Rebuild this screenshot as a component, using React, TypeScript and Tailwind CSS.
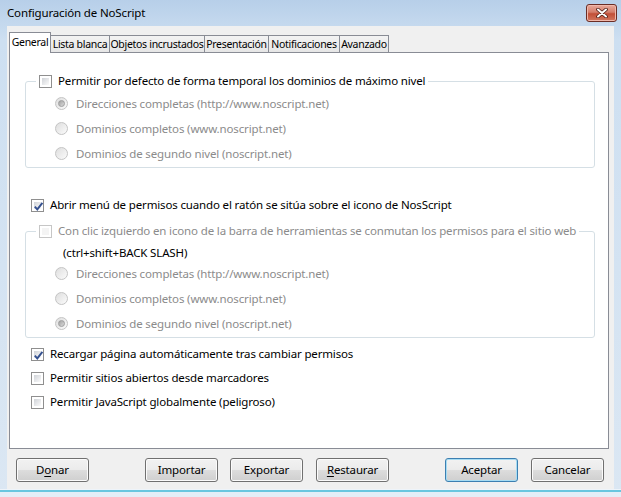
import React from "react";

const F = "font-['Noto_Sans','Open_Sans',sans-serif] tracking-[-0.15px]";

function Checkbox({ checked = false, disabled = false }: { checked?: boolean; disabled?: boolean }) {
  return (
    <span
      className={`relative flex h-[13px] w-[13px] shrink-0 border bg-white p-[2px] ${
        disabled ? "border-[#c6c6c6]" : "border-[#8f8f8f]"
      }`}
    >
      <span className={`flex-1 ${disabled ? "bg-[#f4f4f4]" : "bg-linear-to-br from-[#d0d3d8] to-[#fbfbfb]"}`} />
      {checked && (
        <svg className="absolute left-[1px] top-[1px]" width="11" height="11" viewBox="0 0 11 11">
          <path d="M1.8 5.6 L4.3 8.4 L9.4 1.9" fill="none" stroke="#35518f" strokeWidth="1.9" />
        </svg>
      )}
    </span>
  );
}

function Radio({ selected = false }: { selected?: boolean }) {
  return (
    <span className="flex h-[13px] w-[13px] shrink-0 items-center justify-center rounded-full border border-[#c4c4c4] bg-linear-to-br from-[#dedede] to-[#fbfbfb]">
      {selected && (
        <span className="h-[7px] w-[7px] rounded-full border border-[#9d9d9d] bg-linear-to-br from-[#a2a2a2] to-[#dadada]" />
      )}
    </span>
  );
}

function RadioRow({ label, selected = false }: { label: string; selected?: boolean }) {
  return (
    <div className="flex h-[25px] items-center pl-[29px]">
      <Radio selected={selected} />
      <span className="ml-[8px] whitespace-nowrap text-[11.5px] leading-[16px] text-[#8b8b8b]">{label}</span>
    </div>
  );
}

function CheckRow({ label, checked = false, className = "" }: { label: string; checked?: boolean; className?: string }) {
  return (
    <div className={`flex items-center pl-[21px] ${className}`}>
      <Checkbox checked={checked} />
      <span className="ml-[6px] whitespace-nowrap text-[11.5px] leading-[16px] text-black">{label}</span>
    </div>
  );
}

function Btn({
  children,
  isDefault = false,
  className = "",
}: {
  children: React.ReactNode;
  isDefault?: boolean;
  className?: string;
}) {
  return (
    <div
      className={`flex h-[24px] w-[73px] shrink-0 items-center justify-center rounded-[3px] border text-[11.5px] text-black bg-[linear-gradient(#f2f2f2,#ebebeb_50%,#dddddd_50%,#cfcfcf)] ${
        isDefault
          ? "border-[#3c7fb1] shadow-[inset_0_0_0_1px_#a6dcf3]"
          : "border-[#707070] shadow-[inset_0_0_0_1px_#fbfbfb]"
      } ${className}`}
    >
      {children}
    </div>
  );
}

const tabs: { label: string; w: string }[] = [
  { label: "Lista blanca", w: "w-[60px]" },
  { label: "Objetos incrustados", w: "w-[96px]" },
  { label: "Presentación", w: "w-[65px]" },
  { label: "Notificaciones", w: "w-[72px]" },
  { label: "Avanzado", w: "w-[50px]" },
];

export default function App() {
  return (
    <div
      className={`${F} flex h-[497px] w-[621px] flex-col overflow-hidden bg-[linear-gradient(#b7cfe9,#cddff1_40px,#dbe7f3)]`}
    >
      {/* Title bar */}
      <div className="flex h-[26px] shrink-0 items-start justify-between pl-[7px] pr-[4px]">
        <span className="mt-[5px] whitespace-nowrap text-[11.5px] leading-[16px] text-black">Configuración de NoScript</span>
        <div className="mt-[4px] flex h-[18px] w-[31px] items-center justify-center rounded-[3px] border border-[#6b2d25] bg-[linear-gradient(#e9a99b,#d47e6b_45%,#c24f37_55%,#d2775f)] shadow-[inset_0_0_0_1px_#f0b8ab]">
          <svg width="12" height="10" viewBox="0 0 12 10">
            <path d="M2 1.5 L10 8.5 M10 1.5 L2 8.5" stroke="#4a1a12" strokeWidth="3.6" strokeLinecap="round" />
            <path d="M2 1.5 L10 8.5 M10 1.5 L2 8.5" stroke="#ffffff" strokeWidth="2" strokeLinecap="round" />
          </svg>
        </div>
      </div>

      {/* Client area */}
      <div className="mx-[7px] flex h-[463px] shrink-0 flex-col bg-[#f0f0f0] pt-[6px]">
        {/* Tabs */}
        <div className="flex h-[20px] items-end pl-[2px]">
          <div className="relative z-10 -mb-px flex h-[21px] w-[42px] items-center justify-center whitespace-nowrap border-x border-t border-[#898c95] bg-white pb-[1px] text-[10.5px] tracking-[-0.3px] text-black">
            General
          </div>
          {tabs.map((t) => (
            <div
              key={t.label}
              className={`-ml-px flex h-[17px] ${t.w} items-center justify-center whitespace-nowrap border-x border-t border-[#898c95] bg-linear-to-b from-[#f3f3f3] to-[#e6e6e6] text-[10.5px] leading-[15px] tracking-[-0.3px] text-black`}
            >
              {t.label}
            </div>
          ))}
        </div>

        {/* Panel */}
        <div className="ml-[2px] mr-[5px] flex h-[397px] flex-col border border-[#898c95] bg-white">
          {/* Group box 1 */}
          <fieldset className="ml-[15px] mr-[13px] mt-[20px] rounded-[3px] border border-[#d5dfe5] pb-[1px]">
            <legend className="ml-[10px] flex h-[16px] items-center px-[3px]">
              <Checkbox />
              <span className="ml-[6px] whitespace-nowrap text-[11.5px] leading-[16px] text-black">
                Permitir por defecto de forma temporal los dominios de máximo nivel
              </span>
            </legend>
            <div className="pt-[2px]">
              <RadioRow label="Direcciones completas (http://www.noscript.net)" selected />
              <RadioRow label="Dominios completos (www.noscript.net)" />
              <RadioRow label="Dominios de segundo nivel (noscript.net)" />
            </div>
          </fieldset>

          <CheckRow
            className="mt-[29px] h-[16px]"
            checked
            label="Abrir menú de permisos cuando el ratón se sitúa sobre el icono de NosScript"
          />

          {/* Group box 2 */}
          <fieldset className="ml-[15px] mr-[13px] mt-[10px] rounded-[3px] border border-[#d5dfe5] pb-[1px]">
            <legend className="ml-[10px] flex h-[16px] items-center px-[3px]">
              <Checkbox disabled />
              <span className="ml-[6px] whitespace-nowrap text-[11.5px] leading-[16px] text-[#8b8b8b]">
                Con clic izquierdo en icono de la barra de herramientas se conmutan los permisos para el sitio web
              </span>
            </legend>
            <div className="mt-[6px] h-[16px] whitespace-nowrap pl-[37px] text-[11.5px] leading-[16px] text-black">
              (ctrl+shift+BACK SLASH)
            </div>
            <RadioRow label="Direcciones completas (http://www.noscript.net)" />
            <RadioRow label="Dominios completos (www.noscript.net)" />
            <RadioRow label="Dominios de segundo nivel (noscript.net)" selected />
          </fieldset>

          <div className="mt-[4px] flex flex-col">
            <CheckRow className="h-[24px]" checked label="Recargar página automáticamente tras cambiar permisos" />
            <CheckRow className="h-[24px]" label="Permitir sitios abiertos desde marcadores" />
            <CheckRow className="h-[24px]" label="Permitir JavaScript globalmente (peligroso)" />
          </div>
        </div>

        {/* Buttons */}
        <div className="mt-[9px] flex items-center">
          <Btn className="ml-[9px]">
            <span>
              D<span className="underline underline-offset-2">o</span>nar
            </span>
          </Btn>
          <Btn className="ml-[56px]">Importar</Btn>
          <Btn className="ml-[12px]">Exportar</Btn>
          <Btn className="ml-[13px]">
            <span>
              <span className="underline underline-offset-2">R</span>estaurar
            </span>
          </Btn>
          <Btn className="ml-[56px]" isDefault>
            Aceptar
          </Btn>
          <Btn className="ml-[13px]">Cancelar</Btn>
        </div>
      </div>

      {/* Bottom frame */}
      <div className="h-px shrink-0 bg-[#eef4fa]" />
      <div className="h-[2px] shrink-0 bg-[#68c6df]" />
      <div className="flex-1 bg-[#e3eef7]" />
    </div>
  );
}
